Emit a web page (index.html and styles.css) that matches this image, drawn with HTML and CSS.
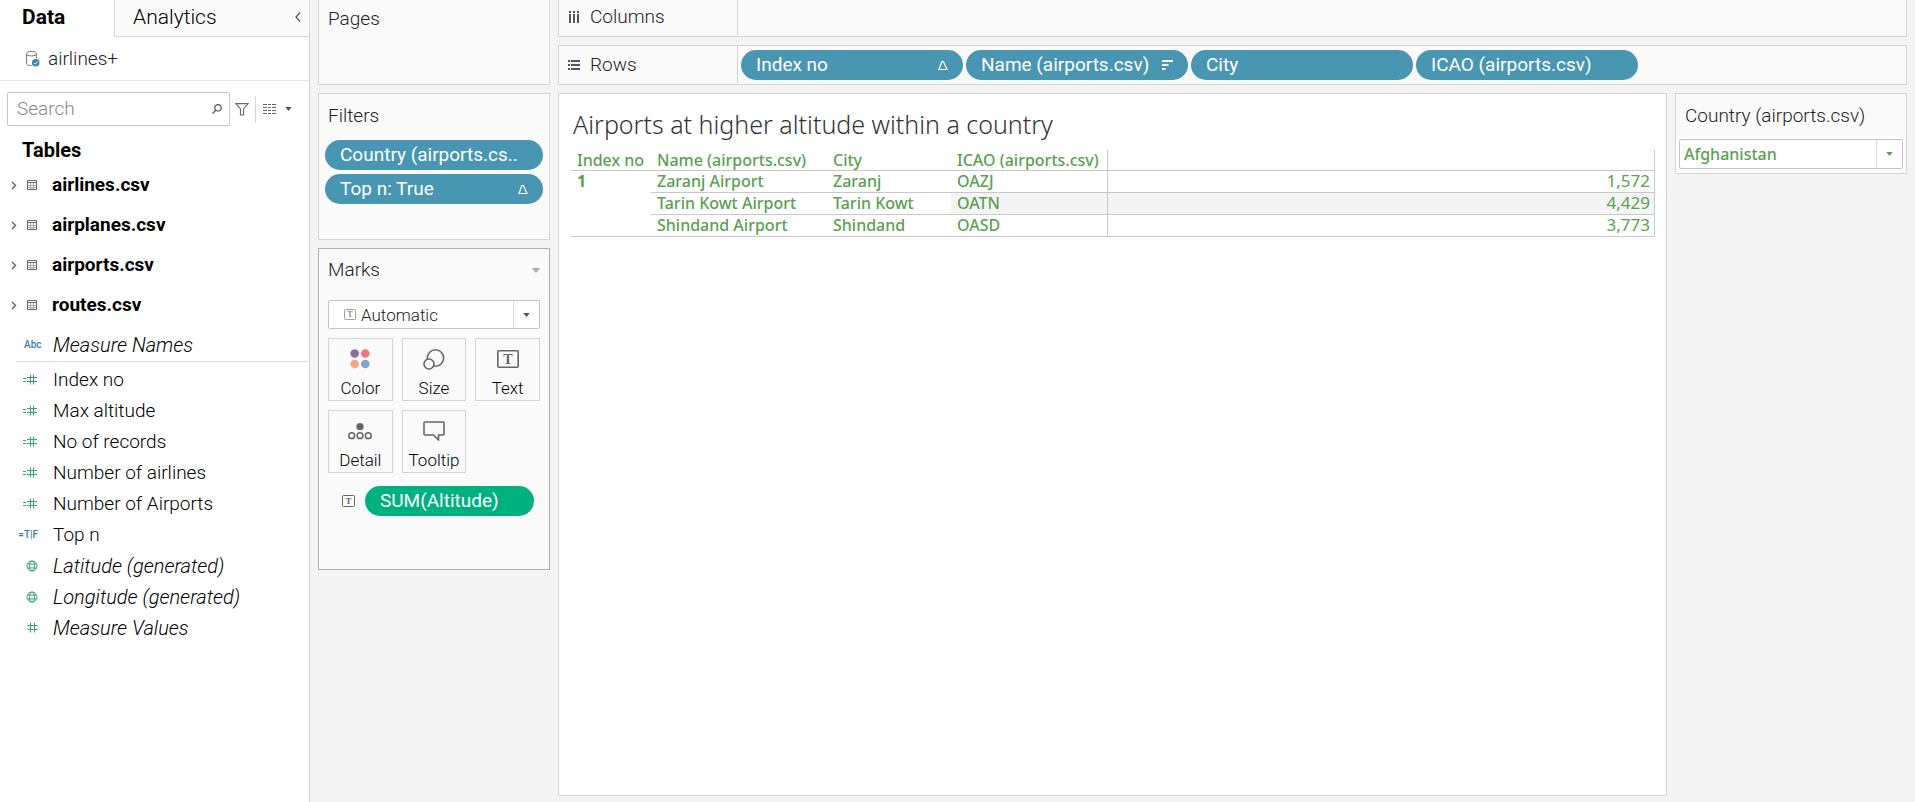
FILE: index.html
```html
<!DOCTYPE html>
<html lang="en">
<head>
<meta charset="utf-8">
<title>airlines+ worksheet</title>
<link rel="stylesheet" href="styles.css">
</head>
<body>
<svg class="defs" aria-hidden="true">
  <symbol id="table" viewBox="0 0 10 10"><path d="M3.500 3v6M6.500 3v6M1 5.500h8M1 7.500h8" fill="none" stroke="#aaa"/><path d="M.5.500h9v9h-9zM1 2.500h8" fill="none" stroke="#666"/></symbol>
  <symbol id="chev" viewBox="0 0 6 9"><path d="M1 1l3.500 3.500L1 8" fill="none" stroke="#666" stroke-width="1.400"/></symbol>
  <symbol id="hash" viewBox="0 0 11 11"><path d="M3.500 0.500v10M7.500 0.500v10M0.500 3.500h10M0.500 7.500h10" fill="none" stroke="#3aa27b"/></symbol>
  <symbol id="calc" viewBox="0 0 15 11"><path d="M0 4.500h3M0 7.500h3M7.500 0.500v10M10.500 0.500v10M4 3.500h10M4 7.500h10" fill="none" stroke="#3aa27b"/></symbol>
  <symbol id="globe" viewBox="0 0 12 12"><g fill="none" stroke="#3aa27b"><circle cx="6" cy="6" r="5"/><ellipse cx="6" cy="6" rx="2.400" ry="5"/><path d="M1.500 4h9M1.500 8h9"/></g></symbol>
  <symbol id="caret" viewBox="0 0 8 5"><path d="M0 0h8L4 5z" fill="currentColor"/></symbol>
  <symbol id="delta" viewBox="0 0 10 11"><path d="M3.800 1.500h1.600l3.600 8H1z" fill="none" stroke="#fff" stroke-width="1.200"/></symbol>
</svg>
<div class="app">
  <aside class="data-pane">
    <div class="tabs">
      <button class="tab tab-on">Data</button>
      <button class="tab tab-off">Analytics<svg width="6" height="10" viewBox="0 0 6 10"><path d="M5 .5L1 5l4 4.500" fill="none" stroke="#555" stroke-width="1.300"/></svg></button>
    </div>
    <div class="source">
      <svg width="14" height="16" viewBox="0 0 14 16"><path d="M.6 3v9.500c0 1 1.500 2 4 2h1M10.400 3v4.500" fill="none" stroke="#777"/><ellipse cx="5.500" cy="2.700" rx="4.900" ry="2.200" fill="none" stroke="#777"/><circle cx="9.700" cy="11.700" r="3.800" fill="#3a86a8"/><path d="M7.800 11.700l1.500 1.500 2.400-2.700" fill="none" stroke="#fff"/></svg>
      <span>airlines+</span>
    </div>
    <div class="search-row">
      <div class="search-box">
        <input type="text" placeholder="Search" aria-label="Search">
        <svg width="10" height="10" viewBox="0 0 10 10"><circle cx="6" cy="3.800" r="3.200" fill="none" stroke="#555" stroke-width="1.200"/><path d="M3.700 6.200L.5 9.500" stroke="#555" stroke-width="1.300"/></svg>
      </div>
      <button class="tool tool-filter" aria-label="Filter"><svg width="14" height="13" viewBox="0 0 14 13"><path d="M.8.600h12.400L8.500 6v6h-3V6z" fill="none" stroke="#666" stroke-width="1.100"/></svg></button>
      <button class="tool tool-view" aria-label="View as"><svg width="13" height="10" viewBox="0 0 13 10"><path d="M0 .5h13M0 3.500h13M0 6.500h13M0 9.500h13" stroke="#666" stroke-dasharray="4 1 3 1"/></svg><svg class="dark" width="7" height="4"><use href="#caret"/></svg></button>
    </div>
    <h2 class="tables-title">Tables</h2>
    <ul class="tables">
      <li><svg class="chev"><use href="#chev"/></svg><svg class="ticon"><use href="#table"/></svg><b>airlines.csv</b></li>
      <li><svg class="chev"><use href="#chev"/></svg><svg class="ticon"><use href="#table"/></svg><b>airplanes.csv</b></li>
      <li><svg class="chev"><use href="#chev"/></svg><svg class="ticon"><use href="#table"/></svg><b>airports.csv</b></li>
      <li><svg class="chev"><use href="#chev"/></svg><svg class="ticon"><use href="#table"/></svg><b>routes.csv</b></li>
    </ul>
    <div class="names"><span class="abc">Abc</span><i>Measure Names</i></div>
    <ul class="fields">
      <li><span class="fi"><svg width="15" height="11"><use href="#calc"/></svg></span>Index no</li>
      <li><span class="fi"><svg width="15" height="11"><use href="#calc"/></svg></span>Max altitude</li>
      <li><span class="fi"><svg width="15" height="11"><use href="#calc"/></svg></span>No of records</li>
      <li><span class="fi"><svg width="15" height="11"><use href="#calc"/></svg></span>Number of airlines</li>
      <li><span class="fi"><svg width="15" height="11"><use href="#calc"/></svg></span>Number of Airports</li>
      <li><span class="fi tf">=T|F</span>Top n</li>
      <li><span class="fi"><svg width="12" height="12"><use href="#globe"/></svg></span><i>Latitude (generated)</i></li>
      <li><span class="fi"><svg width="12" height="12"><use href="#globe"/></svg></span><i>Longitude (generated)</i></li>
      <li><span class="fi"><svg width="11" height="11"><use href="#hash"/></svg></span><i>Measure Values</i></li>
    </ul>
  </aside>

  <div class="cards">
    <section class="card pages"><h3>Pages</h3></section>
    <section class="card filters">
      <h3>Filters</h3>
      <button class="pill">Country (airports.cs..</button>
      <button class="pill">Top n: True<svg width="10" height="11"><use href="#delta"/></svg></button>
    </section>
    <section class="card marks">
      <div class="marks-head"><h3>Marks</h3><svg class="pale" width="8" height="5"><use href="#caret"/></svg></div>
      <div class="select mark-type">
        <svg class="faded" width="12" height="11" viewBox="0 0 13 12"><rect x=".5" y=".5" width="12" height="11" rx="1" fill="none" stroke="#666"/><text x="6.500" y="9" text-anchor="middle" class="serif" font-size="9">T</text></svg>
        <select aria-label="Mark type"><option>Automatic</option></select>
        <span class="drop dark"><svg width="7" height="4"><use href="#caret"/></svg></span>
      </div>
      <div class="mark-grid">
        <button><svg width="20" height="20" viewBox="0 0 20 20"><circle cx="4.700" cy="4.500" r="4.300" fill="#876f99"/><circle cx="15.300" cy="4.500" r="4.300" fill="#fa7284"/><circle cx="4.700" cy="15" r="4.300" fill="#f5a77d"/><circle cx="15.300" cy="15" r="4.300" fill="#80a5ca"/></svg>Color</button>
        <button><svg width="22" height="21" viewBox="0 0 22 21"><g fill="#fafafa" stroke="#666" stroke-width="1.600"><circle cx="12.500" cy="9" r="8.200"/><circle cx="6" cy="15" r="5"/></g></svg>Size</button>
        <button><svg width="22" height="18" viewBox="0 0 22 18"><rect x=".8" y=".8" width="20.400" height="16.400" rx="1" fill="none" stroke="#666" stroke-width="1.600"/><text x="11" y="14" text-anchor="middle" class="serif" font-size="14">T</text></svg>Text</button>
        <button><svg width="24" height="17" viewBox="0 0 24 17"><circle cx="12" cy="3.700" r="3.600" fill="#666"/><g fill="none" stroke="#666" stroke-width="1.500"><circle cx="3.700" cy="12.700" r="2.900"/><circle cx="12" cy="12.700" r="2.900"/><circle cx="20.300" cy="12.700" r="2.900"/></g></svg>Detail</button>
        <button><svg width="22" height="20" viewBox="0 0 22 20"><path d="M2 1h18q1 0 1 1v11q0 1-1 1h-4.500v5L10.500 14H2q-1 0-1-1V2q0-1 1-1z" fill="none" stroke="#666" stroke-width="1.600"/></svg>Tooltip</button>
      </div>
      <div class="mark-field"><svg width="13" height="12" viewBox="0 0 13 12"><rect x=".5" y=".5" width="12" height="11" rx="1" fill="none" stroke="#666"/><text x="6.500" y="9" text-anchor="middle" class="serif" font-size="9">T</text></svg><button class="pill green">SUM(Altitude)</button></div>
    </section>
  </div>

  <main class="work">
    <section class="shelf shelf-cols">
      <div class="shelf-name"><svg width="12" height="12" viewBox="0 0 12 12"><path d="M2 0v2M6 0v2M10 0v2M2 3v9M6 3v9M10 3v9" stroke="#555" stroke-width="2"/></svg>Columns</div>
    </section>
    <section class="shelf shelf-rows">
      <div class="shelf-name"><svg width="12" height="11" viewBox="0 0 12 11"><path d="M0 1h2M0 5h2M0 9h2M3 1h9M3 5h9M3 9h9" stroke="#555" stroke-width="2"/></svg>Rows</div>
      <div class="pills">
        <button class="pill">Index no<svg width="10" height="11"><use href="#delta"/></svg></button>
        <button class="pill">Name (airports.csv)<svg width="11" height="10" viewBox="0 0 11 10"><path d="M0 1h11M0 5h6.500M0 9h3.500" stroke="#fff" stroke-width="1.800"/></svg></button>
        <button class="pill">City</button>
        <button class="pill">ICAO (airports.csv)</button>
      </div>
    </section>
    <div class="view">
      <section class="sheet">
        <h1>Airports at higher altitude within a country</h1>
        <table>
          <colgroup><col class="c-idx"><col class="c-name"><col class="c-city"><col class="c-icao"><col></colgroup>
          <thead><tr><th>Index no</th><th>Name (airports.csv)</th><th>City</th><th class="rule">ICAO (airports.csv)</th><th class="val"></th></tr></thead>
          <tbody>
            <tr><td rowspan="3" class="idx">1</td><td>Zaranj Airport</td><td>Zaranj</td><td class="rule">OAZJ</td><td class="val">1,572</td></tr>
            <tr><td>Tarin Kowt Airport</td><td>Tarin Kowt</td><td class="rule band">OATN</td><td class="val band">4,429</td></tr>
            <tr><td>Shindand Airport</td><td>Shindand</td><td class="rule">OASD</td><td class="val">3,773</td></tr>
          </tbody>
        </table>
      </section>
      <section class="card country">
        <h3><label for="country">Country (airports.csv)</label></h3>
        <div class="select country-select">
          <select id="country"><option>Afghanistan</option></select>
          <span class="drop leaf"><svg width="7" height="4"><use href="#caret"/></svg></span>
        </div>
      </section>
    </div>
  </main>
</div>
</body>
</html>
```

FILE: styles.css
```css
* { box-sizing: border-box; }
body {
  margin: 0;
  background: #f4f4f4;
  color: #000;
  font: 300 19px/24px Roboto, "Liberation Sans", sans-serif;
}
h1, h2, h3, ul { margin: 0; padding: 0; font-weight: 300; }
li { list-style: none; }
button, input, select { font: inherit; color: inherit; margin: 0; padding: 0; border: 0; background: none; }
svg { flex: none; display: block; }
.defs { position: absolute; width: 0; height: 0; }
.serif { font-family: "Liberation Serif", serif; font-weight: 700; fill: #666; }
.dark { color: #555; }
.pale { color: #aaa; }
.leaf { color: #59a14f; }
.faded { opacity: 0.7; }

.app { display: grid; grid-template-columns: 310px 232px minmax(0, 1fr); gap: 8px; min-height: 100vh; padding-right: 8px; }

.data-pane { background: #fff; border-right: 1px solid #d4d4d4; }
.data-pane i { font-size: 20px; }
.tabs { display: flex; height: 37px; }
.tab { text-align: left; font-size: 21px; padding-bottom: 3px; }
.tab-on { width: 114px; padding-left: 22px; font-weight: 700; }
.tab-off { flex: 1; display: flex; align-items: center; justify-content: space-between; padding-left: 18px; padding-right: 8px; background: #fafafa; border: solid #d4d4d4; border-width: 0 0 1px 1px; }
.source { display: flex; align-items: center; gap: 8px; height: 44px; padding-left: 26px; border-bottom: 1px solid #e3e3e3; color: #222; }
.search-row { display: flex; align-items: center; height: 34px; margin: 11px 8px 0 7px; }
.search-box { display: flex; align-items: center; width: 223px; height: 34px; padding: 0 7px 0 9px; border: 1px solid #c4c4c4; border-radius: 2px; }
.search-box input { flex: 1; min-width: 0; outline: 0; }
.search-box input::placeholder { color: #888; opacity: 1; }
.tool { display: flex; align-items: center; height: 27px; }
.tool-filter { padding: 0 6px 0 5px; }
.tool-view { gap: 9px; padding-left: 7px; border-left: 1px solid #d4d4d4; }
.tables-title { margin-top: 12px; padding-left: 22px; font-size: 20px; font-weight: 700; }
.tables { margin-top: 3px; }
.tables li { display: flex; align-items: center; height: 40px; padding-left: 11px; }
.tables b { font-weight: 700; }
.chev { width: 6px; height: 9px; margin-right: 10px; }
.ticon { width: 10px; height: 10px; margin-right: 15px; }
.names { display: flex; align-items: center; height: 37px; margin-left: 17px; padding-top: 4px; border-bottom: 1px solid #dcdcdc; }
.abc { width: 36px; padding-left: 7px; font: 500 10px/12px Roboto, sans-serif; color: #3a7f9f; }
.fields { margin-top: 2px; }
.fields li { display: flex; align-items: center; height: 31px; }
.fi { display: flex; justify-content: flex-end; width: 38px; margin-right: 15px; }
.tf { font: 500 10px/12px Roboto, sans-serif; color: #3a7f9f; }

.cards { display: flex; flex-direction: column; gap: 8px; }
.card { background: #fafafa; border: 1px solid #d4d4d4; }
.card h3 { padding-left: 9px; font-size: 19px; color: #222; }
.pages { height: 85px; padding-top: 7px; border-top: 0; }
.filters { display: flex; flex-direction: column; gap: 4px; height: 147px; padding: 10px 6px 0; }
.filters h3 { padding-left: 3px; margin-bottom: 8px; }
.pill { display: flex; align-items: center; justify-content: space-between; height: 30px; padding: 0 15px; border-radius: 15px; background: #4996b2; color: #fff; font-weight: 400; white-space: nowrap; }
.green { flex: 1; background: #00b180; }
.marks { height: 322px; padding: 9px 9px 0; border-color: #b0b0b0; }
.marks-head { display: flex; align-items: center; justify-content: space-between; }
.marks-head h3 { padding-left: 0; }
.select { display: flex; align-items: center; background: #fff; border: 1px solid #c4c4c4; border-radius: 2px; }
.select select { appearance: none; flex: 1; min-width: 0; outline: 0; }
.drop { display: flex; align-items: center; justify-content: center; align-self: stretch; width: 26px; border-left: 1px solid #dcdcdc; }
.mark-type { height: 29px; margin-top: 18px; padding-left: 15px; gap: 5px; font-size: 17px; color: #222; }
.mark-grid { display: grid; grid-template-columns: repeat(3, 1fr); gap: 9px; margin-top: 9px; }
.mark-grid button { display: grid; grid-template-rows: 1fr 24px; justify-items: center; align-items: center; height: 63px; padding-top: 3px; border: 1px solid #d4d4d4; font-size: 17px; }
.mark-field { display: flex; align-items: center; gap: 10px; margin-top: 13px; padding: 0 6px 0 14px; }

.work { display: flex; flex-direction: column; gap: 8px; padding-bottom: 6px; }
.shelf { display: flex; background: #fafafa; border: 1px solid #d4d4d4; }
.shelf-cols { height: 37px; border-top: 0; }
.shelf-rows { height: 40px; }
.shelf-name { display: flex; align-items: center; gap: 10px; width: 179px; padding-left: 9px; border-right: 1px solid #d4d4d4; color: #222; }
.shelf-cols .shelf-name { padding-bottom: 2px; }
.pills { display: flex; align-items: center; gap: 3px; padding-left: 3px; }
.pills .pill { width: 222px; }
.view { flex: 1; display: grid; grid-template-columns: minmax(0, 1fr) 232px; gap: 8px; align-items: stretch; }
.sheet { padding: 16px 11px 0 12px; background: #fff; border: 1px solid #d4d4d4; }
h1 { padding-left: 2px; margin-bottom: 12px; font: 300 25px/28px "Noto Sans", sans-serif; color: #333; }
table { width: 100%; table-layout: fixed; border-spacing: 0; font: 500 16px/20px "Noto Sans", sans-serif; color: #59a14f; }
th, td { height: 22px; padding: 0 0 1px 6px; border-bottom: 1px solid #c8c8c8; font-weight: 500; text-align: left; white-space: nowrap; }
th { height: 21px; padding-bottom: 0; line-height: 18px; }
.c-idx { width: 80px; }
.c-name { width: 176px; }
.c-city { width: 124px; }
.c-icao { width: 157px; }
.rule { border-right: 1px solid #c8c8c8; }
.val { border-right: 1px solid #c8c8c8; padding-right: 4px; text-align: right; font-size: 17px; font-weight: 400; }
.idx { font-weight: 700; vertical-align: top; }
.band { background: #f4f4f4; }
.country { align-self: start; padding: 0 3px 4px; background: #fff; }
.country h3 { margin: 0 -3px 3px; padding: 10px 9px 8px; background: #fafafa; }
.country-select { height: 30px; padding-left: 4px; font: 500 16px/20px "Noto Sans", sans-serif; color: #59a14f; }
```
